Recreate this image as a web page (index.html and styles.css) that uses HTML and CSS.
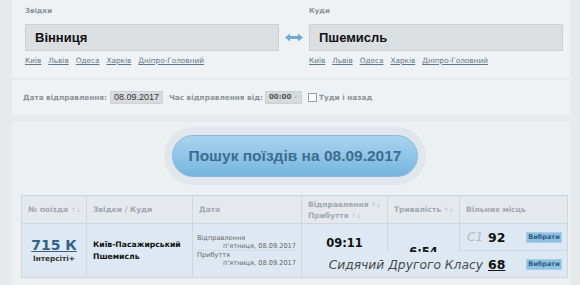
FILE: index.html
```html
<!DOCTYPE html>
<html lang="uk">
<head>
    <meta charset="UTF-8">
    <meta name="viewport" content="width=device-width, initial-scale=1.0">
    <title>Пошук поїздів</title>
    <link rel="stylesheet" href="styles.css">
</head>
<body>
<div class="page">
    <div class="route-panel">
        <div class="field">
            <div class="field-label">Звідки</div>
            <div class="station-input">Вінниця</div>
            <div class="quick-links">
                <a href="#">Київ</a><a href="#">Львів</a><a href="#">Одеса</a><a href="#">Харків</a><a href="#">Дніпро-Головний</a>
            </div>
        </div>
        <div class="swap">
            <svg width="18" height="9" viewBox="0 0 18 9">
                <path d="M0 4.5 L5 0.5 L5 3 L13 3 L13 0.5 L18 4.5 L13 8.5 L13 6 L5 6 L5 8.5 Z" fill="#6fabd8"/>
            </svg>
        </div>
        <div class="field">
            <div class="field-label">Куди</div>
            <div class="station-input">Пшемисль</div>
            <div class="quick-links">
                <a href="#">Київ</a><a href="#">Львів</a><a href="#">Одеса</a><a href="#">Харків</a><a href="#">Дніпро-Головний</a>
            </div>
        </div>
    </div>

    <div class="options-panel">
        <span>Дата відправлення:</span>
        <span class="date-box">08.09.2017</span>
        <span class="opt-gap">Час відправлення від:</span>
        <span class="time-select">00:00 <span class="caret">&#8964;</span></span>
        <span class="check"></span>
        <span>Туди і назад</span>
    </div>

    <div class="results">
        <div class="search-area">
            <button class="search-btn">Пошук поїздів на 08.09.2017</button>
        </div>

        <table class="trains">
            <colgroup>
                <col class="c-num"><col class="c-route"><col class="c-date"><col class="c-time"><col class="c-dur"><col class="c-seats">
            </colgroup>
            <thead>
                <tr>
                    <th>№ поїзда <span class="sort">↑↓</span></th>
                    <th>Звідки / Куди</th>
                    <th>Дата</th>
                    <th>Відправлення <span class="sort">↑↓</span><br>Прибуття <span class="sort">↑↓</span></th>
                    <th>Тривалість <span class="sort">↑↓</span></th>
                    <th>Вільних місць</th>
                </tr>
            </thead>
            <tbody>
                <tr>
                    <td class="num">
                        <a href="#" class="train-no">715 К</a>
                        <div class="train-type">Інтерсіті+</div>
                    </td>
                    <td class="route">Київ-Пасажирський<br>Пшемисль</td>
                    <td class="dates">
                        <div class="date-block">
                            <div>Відправлення</div>
                            <div class="date-val">п'ятниця, 08.09.2017</div>
                        </div>
                        <div>Прибуття</div>
                        <div class="date-val">п'ятниця, 08.09.2017</div>
                    </td>
                    <td class="time">09:11</td>
                    <td class="duration">6:54</td>
                    <td class="seats">
                        <div class="seat-row first">
                            <span class="seat-class">С1</span>
                            <span class="seat-count">92</span>
                            <button class="pick-btn">Вибрати</button>
                        </div>
                        <div class="seat-row">
                            <span class="seat-class"></span>
                            <span class="class-tip">Сидячий Другого Класу</span>
                            <span class="seat-count hover">68</span>
                            <button class="pick-btn">Вибрати</button>
                        </div>
                    </td>
                </tr>
            </tbody>
        </table>
    </div>
</div>
</body>
</html>
```

FILE: styles.css
```css
body {
    margin: 0;
    background: #e6eaed;
    font-family: "DejaVu Sans", Verdana, sans-serif;
}
.page {
    padding: 0 10px 0 12px;
}
.route-panel {
    display: flex;
    background: #eff2f4;
    padding: 6px 7px 12px 13px;
}
.field {
    width: 254px;
}
.field-label {
    font-size: 7px;
    font-weight: bold;
    color: #8a9095;
    line-height: 10px;
    margin-bottom: 8px;
}
.station-input {
    height: 27px;
    box-sizing: border-box;
    border: 1px solid #cdd0d3;
    background: #dcdfe1;
    font: bold 13px "Liberation Sans", Arial, sans-serif;
    color: #111;
    padding-left: 9px;
    line-height: 25px;
}
.quick-links {
    margin-top: 5px;
    display: flex;
    gap: 7px;
    font-size: 7.3px;
    line-height: 10px;
}
.quick-links a {
    color: #60778a;
}
.swap {
    width: 30px;
    height: 27px;
    margin-top: 18px;
    display: flex;
    align-items: center;
    justify-content: center;
}
.options-panel {
    margin-top: 2px;
    height: 35px;
    background: #eff2f4;
    display: flex;
    align-items: center;
    padding-left: 11px;
    font-size: 7.3px;
    font-weight: bold;
    color: #8c9399;
}
.date-box {
    margin-left: 3px;
    width: 53px;
    height: 13px;
    box-sizing: border-box;
    background: #d9dcdf;
    border: 1px solid #cfd2d5;
    font: 9px/11px "Liberation Sans", Arial, sans-serif;
    color: #333;
    text-align: center;
}
.opt-gap {
    margin-left: 6px;
}
.time-select {
    margin-left: 2px;
    width: 37px;
    height: 13px;
    box-sizing: border-box;
    display: flex;
    justify-content: space-between;
    background: #d6dadd;
    border: 1px solid #cdd1d4;
    color: #555;
    font-size: 7px;
    line-height: 11px;
    padding: 0 3px;
    white-space: nowrap;
}
.caret {
    color: #999;
    font-weight: normal;
    font-size: 6px;
    line-height: 8px;
}
.check {
    margin-left: 6px;
    margin-right: 2px;
    width: 7px;
    height: 7px;
    background: #fff;
    border: 1px solid #9aa0a5;
}
.results {
    margin-top: 7px;
    background: #ecf0f2;
    padding-bottom: 8px;
}
.search-area {
    display: flex;
    justify-content: center;
    padding: 13px 0 18px 8px;
}
.search-btn {
    width: 246px;
    height: 42px;
    padding: 0;
    border-radius: 21px;
    border: 1px solid #86bbe0;
    background: linear-gradient(#a9d4ef, #76b5df);
    box-shadow: 0 0 0 8px #e0e6eb;
    font: bold 15.5px "Liberation Sans", Arial, sans-serif;
    white-space: nowrap;
    color: #3d6d8f;
    cursor: pointer;
}
.trains {
    margin-left: 9px;
    width: 546px;
    table-layout: fixed;
    border-collapse: collapse;
}
.c-num { width: 65px; }
.c-route { width: 106px; }
.c-date { width: 109px; }
.c-time { width: 86px; }
.c-dur { width: 72px; }
.c-seats { width: 108px; }
.trains th, .trains td {
    border: 1px solid #cfd6dd;
}
.trains thead tr {
    height: 28px;
}
.trains tbody tr {
    height: 54px;
}
.trains th {
    padding: 0 5px 0 6px;
    background: #e5e9ed;
    text-align: left;
    white-space: nowrap;
    font-size: 7.5px;
    line-height: 11px;
    color: #a0a8b0;
}
.sort {
    font-weight: normal;
    font-size: 6px;
    color: #b9c0c6;
}
.trains td {
    padding: 0;
    background: #dde8f2;
    vertical-align: middle;
}
.num {
    text-align: center;
}
.train-no {
    display: block;
    font-size: 14px;
    font-weight: bold;
    line-height: 17px;
    color: #32628a;
}
.train-type {
    font-size: 7.3px;
    font-weight: bold;
    line-height: 10px;
    color: #333;
}
.trains td.route {
    padding-left: 6px;
    font-size: 7.7px;
    font-weight: bold;
    line-height: 12px;
    color: #111;
}
.trains td.dates {
    padding: 0 5px 0 4px;
    font-size: 6.6px;
    line-height: 8px;
    color: #666;
}
.date-block {
    border-bottom: 1px dotted #c2ccd5;
}
.date-val {
    text-align: right;
}
.trains td.time {
    text-align: center;
    font-size: 11.5px;
    font-weight: bold;
    color: #111;
    padding-bottom: 16px;
}
.trains td.duration {
    text-align: center;
    font-size: 11.5px;
    font-weight: bold;
    color: #111;
    padding-top: 2px;
}
.seat-row {
    position: relative;
    display: flex;
    align-items: center;
    height: 26px;
    padding-left: 7px;
}
.seat-row.first {
    border-bottom: 1px solid #cfd6dd;
}
.seat-class {
    width: 21px;
    font-size: 12px;
    font-style: italic;
    color: #b3bbc3;
}
.seat-count {
    font-size: 12.5px;
    font-weight: bold;
    color: #111;
}
.seat-count.hover {
    text-decoration: underline;
}
.class-tip {
    position: absolute;
    z-index: 2;
    right: calc(100% - 26px);
    top: 1px;
    bottom: 0;
    display: flex;
    align-items: center;
    padding: 0 3px 0 7px;
    background: #dde8f2;
    white-space: nowrap;
    font-size: 12.3px;
    font-style: italic;
    color: #4a4a4a;
}
.pick-btn {
    margin-left: auto;
    margin-right: 5px;
    width: 36px;
    height: 11px;
    padding: 0;
    border: 1px solid #a9cde6;
    background: #8ec1e4;
    font: bold 6.5px/9px "DejaVu Sans", Verdana, sans-serif;
    color: #2f5d80;
    cursor: pointer;
}
```
